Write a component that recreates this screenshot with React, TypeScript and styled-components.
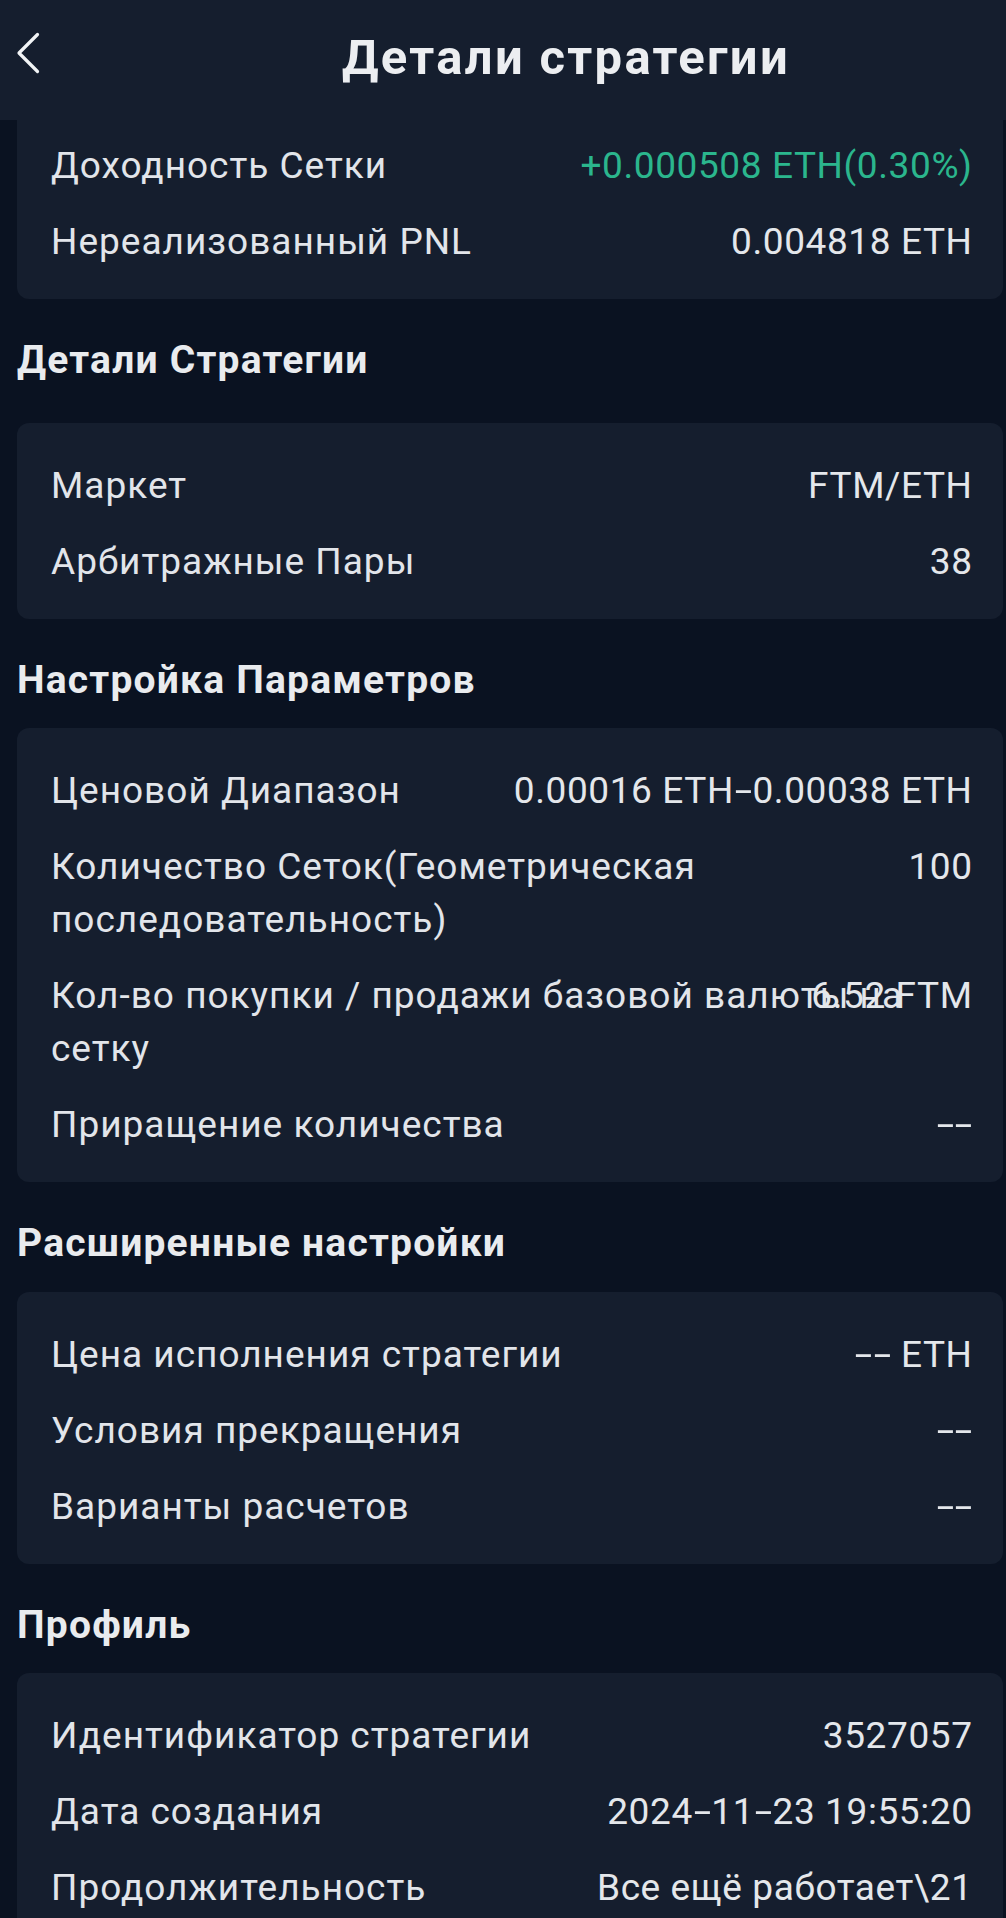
import React from 'react';
import styled, { createGlobalStyle } from 'styled-components';

const GlobalStyle = createGlobalStyle`
  html, body {
    margin: 0;
    padding: 0;
    background: #0a1221;
  }
  body {
    font-family: Roboto, "Noto Sans", "Liberation Sans", sans-serif;
    color: #e4e7eb;
    -webkit-font-smoothing: antialiased;
  }
  * { box-sizing: border-box; }
`;

const Page = styled.div`
  width: 1006px;
  min-height: 1918px;
  background: #0a1221;
`;

const TopBar = styled.header`
  height: 120px;
  background: #151e2e;
  display: flex;
  align-items: flex-start;
`;

const BackButton = styled.button`
  width: 126px;
  flex: none;
  display: flex;
  align-items: flex-start;
  padding: 32px 0 0 16px;
  background: none;
  border: 0;
  color: #f2f4f6;
  cursor: pointer;
`;

const Title = styled.h1`
  flex: 1;
  margin: 0;
  padding-top: 33px;
  text-align: center;
  font-size: 49px;
  line-height: 49px;
  font-weight: 700;
  letter-spacing: 2.3px;
  color: #eceef1;
`;

const Content = styled.main`
  padding: 0 3px 40px 17px;
`;

const Card = styled.section<{ $flatTop?: boolean }>`
  background: #151e2e;
  border-radius: ${(p) => (p.$flatTop ? '0 0 12px 12px' : '12px')};
  padding: ${(p) => (p.$flatTop ? '19px' : '36px')} 31px 31px 34px;
  display: flex;
  flex-direction: column;
  gap: 23px;
`;

const SectionTitle = styled.h2<{ $roomy?: boolean }>`
  margin: 35px 0 ${(p) => (p.$roomy ? '35.5px' : '21.5px')};
  font-size: 39px;
  line-height: 53px;
  font-weight: 700;
  letter-spacing: 1.2px;
  color: #e9ebee;
`;

const Row = styled.div`
  display: grid;
  font-size: 37px;
  line-height: 53px;
`;

const Label = styled.span`
  grid-area: 1 / 1;
  color: #e2e5ea;
  letter-spacing: 1px;
`;

const Value = styled.span<{ $tone?: 'up' | 'plain' }>`
  grid-area: 1 / 1;
  justify-self: end;
  align-self: start;
  white-space: nowrap;
  letter-spacing: 0.6px;
  margin-right: -0.6px;
  color: ${(p) => (p.$tone === 'up' ? '#2bb68d' : '#e4e7eb')};
`;

/* the app font draws a wide hyphen; widen Roboto's within its own slot */
const Dash = styled.span`
  display: inline-block;
  width: 0.29em;
  margin: 0 0.105em;
  text-align: center;
  letter-spacing: 0;
  transform: scaleX(1.7);
`;

type Item = { label: string; value: string; tone?: 'up' | 'plain' };

const withDashes = (text: string) =>
  text.split(/(-)/).map((part, i) =>
    part === '-' ? <Dash key={i}>-</Dash> : <React.Fragment key={i}>{part}</React.Fragment>
  );

const Chevron = () => (
  <svg width="24" height="42" viewBox="0 0 24 42" fill="none">
    <path
      d="M21.5 2.5 L3 21 L21.5 39.5"
      stroke="currentColor"
      strokeWidth="3.2"
      strokeLinecap="round"
      strokeLinejoin="round"
    />
  </svg>
);

const InfoCard = ({ items, flatTop }: { items: Item[]; flatTop?: boolean }) => (
  <Card $flatTop={flatTop}>
    {items.map((it) => (
      <Row key={it.label}>
        <Label>{it.label}</Label>
        <Value $tone={it.tone}>{withDashes(it.value)}</Value>
      </Row>
    ))}
  </Card>
);

const summary: Item[] = [
  { label: 'Доходность Сетки', value: '+0.000508 ETH(0.30%)', tone: 'up' },
  { label: 'Нереализованный PNL', value: '0.004818 ETH' },
];

const strategy: Item[] = [
  { label: 'Маркет', value: 'FTM/ETH' },
  { label: 'Арбитражные Пары', value: '38' },
];

const params: Item[] = [
  { label: 'Ценовой Диапазон', value: '0.00016 ETH-0.00038 ETH' },
  { label: 'Количество Сеток(Геометрическая последовательность)', value: '100' },
  { label: 'Кол-во покупки / продажи базовой валюты на сетку', value: '6.52 FTM' },
  { label: 'Приращение количества', value: '--' },
];

const advanced: Item[] = [
  { label: 'Цена исполнения стратегии', value: '-- ETH' },
  { label: 'Условия прекращения', value: '--' },
  { label: 'Варианты расчетов', value: '--' },
];

const profile: Item[] = [
  { label: 'Идентификатор стратегии', value: '3527057' },
  { label: 'Дата создания', value: '2024-11-23 19:55:20' },
  { label: 'Продолжительность', value: 'Все ещё работает\\21' },
];

export default function App() {
  return (
    <Page>
      <GlobalStyle />
      <TopBar>
        <BackButton aria-label="Назад">
          <Chevron />
        </BackButton>
        <Title>Детали стратегии</Title>
      </TopBar>
      <Content>
        <InfoCard items={summary} flatTop />
        <SectionTitle $roomy>Детали Стратегии</SectionTitle>
        <InfoCard items={strategy} />
        <SectionTitle>Настройка Параметров</SectionTitle>
        <InfoCard items={params} />
        <SectionTitle>Расширенные настройки</SectionTitle>
        <InfoCard items={advanced} />
        <SectionTitle>Профиль</SectionTitle>
        <InfoCard items={profile} />
      </Content>
    </Page>
  );
}
